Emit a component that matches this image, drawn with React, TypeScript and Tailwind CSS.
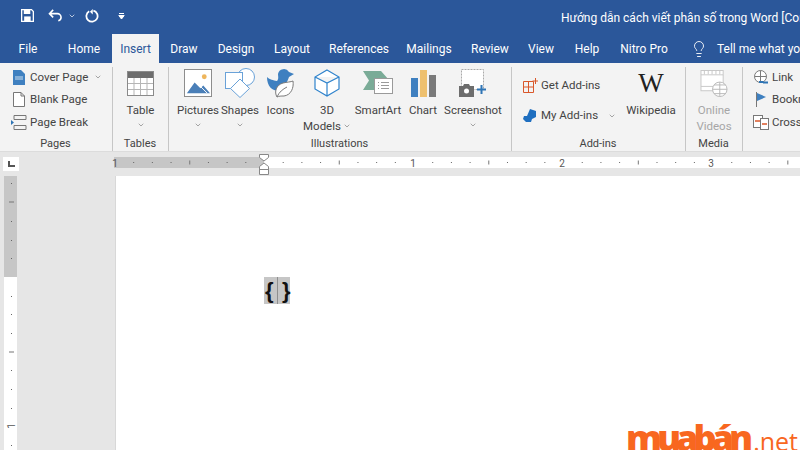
import { ChevronDown, Lightbulb } from "lucide-react"
import type { ReactNode } from "react"

const tabs = [
  { label: "File", w: "w-[56px]" },
  { label: "Home", w: "w-[56px]" },
  { label: "Insert", w: "w-[47px]", active: true },
  { label: "Draw", w: "w-[50px]" },
  { label: "Design", w: "w-[54px]" },
  { label: "Layout", w: "w-[58px]" },
  { label: "References", w: "w-[76px]" },
  { label: "Mailings", w: "w-[64px]" },
  { label: "Review", w: "w-[58px]" },
  { label: "View", w: "w-[44px]" },
  { label: "Help", w: "w-[48px]" },
  { label: "Nitro Pro", w: "w-[66px]" },
]

function Caret({ className = "" }: { className?: string }) {
  return <ChevronDown size={8} strokeWidth={1.5} className={"text-[#555] " + className} />
}

function Group({ label, className, children }: { label: string; className: string; children: ReactNode }) {
  return (
    <div className={"flex shrink-0 flex-col border-r border-[#c6c6c6] " + className}>
      <div className="flex h-[72px] min-h-0">{children}</div>
      <div className="mr-px text-center text-[11px] leading-[10px] text-[#444]">{label}</div>
    </div>
  )
}

function BigButton({
  icon,
  label,
  className,
  caret,
  muted,
}: {
  icon: ReactNode
  label: ReactNode
  className: string
  caret?: boolean
  muted?: boolean
}) {
  return (
    <div className={"flex shrink-0 flex-col items-center " + className}>
      <div className="mb-[3px] flex h-[32px] items-center justify-center">{icon}</div>
      <div className={"text-center text-[11.5px] leading-[16px] whitespace-nowrap " + (muted ? "text-[#a6a6a6]" : "text-[#444]")}>
        {label}
      </div>
      {caret && <Caret className="mt-[3px]" />}
    </div>
  )
}

function SmallRow({ icon, label, caret, caretGap = "ml-[6px]" }: { icon: ReactNode; label: string; caret?: boolean; caretGap?: string }) {
  return (
    <div className="flex h-[22.5px] items-center text-[11.5px] whitespace-nowrap text-[#444]">
      <div className="flex w-[20px] shrink-0 justify-center">{icon}</div>
      <span className="ml-[1px]">{label}</span>
      {caret && <Caret className={caretGap} />}
    </div>
  )
}

function HorizontalRuler() {
  const ticks = Array.from({ length: 37 }, (_, i) => 150 + (i - 8) * 18.69)
  return (
    <svg width="686" height="11" className="block overflow-visible">
      <rect width="686" height="11" fill="#fff" />
      <rect width="150" height="11" fill="#c6c6c6" />
      {ticks.map((x, i) => {
        const n = i - 8
        if (n % 8 === 0) return null
        return n % 4 === 0 ? (
          <rect key={i} x={x} y="3.5" width="1" height="4" fill="#777" />
        ) : (
          <rect key={i} x={x} y="5" width="1" height="1" fill="#666" />
        )
      })}
      {[
        [1, "1"],
        [299, "1"],
        [448, "2"],
        [597, "3"],
      ].map(([x, t], i) => (
        <text key={i} x={x} y="9.5" textAnchor="middle" fontSize="10" fontFamily="Roboto" fill="#555">
          {t}
        </text>
      ))}
    </svg>
  )
}

function VerticalRuler() {
  const marks = [7, 26, 45, 64, 82, 120, 138, 157, 176, 194, 213, 232, 269]
  return (
    <svg width="13" height="274" className="block">
      <rect width="13" height="274" fill="#fff" />
      <rect width="13" height="101" fill="#c6c6c6" />
      {marks.map((y, i) =>
        y === 26 || y === 176 ? (
          <rect key={i} x="5" y={y - 0.5} width="5" height="1" fill="#777" />
        ) : (
          <rect key={i} x="7" y={y} width="1" height="1" fill="#666" />
        ),
      )}
      <text x="0" y="0" transform="translate(11 250) rotate(-90)" textAnchor="middle" fontSize="10" fontFamily="Roboto" fill="#555">
        1
      </text>
    </svg>
  )
}

export default function App() {
  return (
    <div className="relative flex h-[450px] w-[800px] flex-col overflow-hidden bg-[#e6e6e6] font-['Roboto','Noto_Sans',sans-serif] text-[#444]">
      {/* title bar */}
      <div className="flex h-[34px] shrink-0 items-center bg-[#2b579a] pt-[2px] text-white">
        <div className="-mt-[5px] ml-[21px] flex items-center">
          <svg width="13" height="13" viewBox="0 0 14 14">
            <path d="M0.7 0.7h10.6l2 2v10.6H0.7z" fill="none" stroke="#fff" strokeWidth="1.4" />
            <rect x="3" y="1" width="7" height="4.4" fill="#fff" />
            <rect x="3.4" y="8" width="7" height="5" fill="#fff" />
          </svg>
          <svg width="15" height="13" viewBox="0 0 16 14" className="ml-[14px]">
            <path d="M5.5 1 1.5 5l4 4M1.500 5H10a4 4 0 0 1 4 4 3.600 3.600 0 0 1-3 3.600" fill="none" stroke="#fff" strokeWidth="1.700" />
          </svg>
          <ChevronDown size={8} strokeWidth={2} className="ml-[5px] text-white" />
          <svg width="14" height="14" viewBox="0 0 15 15" className="ml-[9px]">
            <path d="M4.500 2.400A6 6 0 1 0 9 1.800" fill="none" stroke="#fff" strokeWidth="1.900" />
            <path d="M8.300 0v6L5.300 3z" fill="#fff" />
          </svg>
          <svg width="7" height="8" viewBox="0 0 7 8" className="ml-[19px]">
            <path d="M1 1.500h5M.8 3.500h5.400L3.500 7z" stroke="#fff" fill="#fff" strokeWidth="1" />
          </svg>
        </div>
        <div className="ml-[436px] overflow-hidden text-[12px] whitespace-nowrap">
          Hướng dẫn cách viết phân số trong Word [Compatibility Mode] - Word
        </div>
      </div>

      {/* tabs */}
      <div className="flex h-[29px] shrink-0 items-center bg-[#2b579a] text-[12px] text-white">
        {tabs.map((t) => (
          <div
            key={t.label}
            className={
              "flex h-full shrink-0 items-center justify-center " +
              t.w +
              (t.active ? " bg-[#f3f3f3] text-[#2b579a]" : "")
            }
          >
            {t.label}
          </div>
        ))}
        <Lightbulb size={18} strokeWidth={1.2} className="ml-[13px] shrink-0" />
        <span className="ml-[9px] whitespace-nowrap">Tell me what you want to do</span>
      </div>

      {/* ribbon */}
      <div className="flex h-[89px] shrink-0 overflow-hidden border-b border-[#dcdcdc] bg-[#f3f3f3] pt-[4px]">
        <Group label="Pages" className="w-[113px]">
          <div className="-mt-px flex flex-col pl-[9px]">
            <SmallRow
              label="Cover Page"
              caret
              icon={
                <svg width="12" height="15" viewBox="0 0 12 15">
                  <path d="M0 0h8l4 4v11H0z" fill="#3f80c0" />
                  <path d="M2 7h8M2 9h8" stroke="#cfe0f0" />
                </svg>
              }
            />
            <SmallRow
              label="Blank Page"
              icon={
                <svg width="12" height="15" viewBox="0 0 12 15">
                  <path d="M.5.5H8L11.500 4v10.500H.5zM8 .5V4h3.500" fill="#fff" stroke="#777" />
                </svg>
              }
            />
            <SmallRow
              label="Page Break"
              icon={
                <svg width="16" height="15" viewBox="0 0 16 15">
                  <path d="M3 .5h12M3 4.500h12M3 10.500h12M3 14.500h12M3 .5v4M15 .5v4M3 10.500v4M15 10.500v4" fill="none" stroke="#777" />
                  <path d="M0 5l3 2.500L0 10z" fill="#2f75b5" />
                </svg>
              }
            />
          </div>
        </Group>

        <Group label="Tables" className="w-[56px]">
          <BigButton
            className="w-[55px]"
            label="Table"
            caret
            icon={
              <svg width="27" height="25" viewBox="0 0 27 25">
                <rect x=".5" y=".5" width="26" height="24" fill="#fff" stroke="#8a8a8a" />
                <rect x="1" y="1" width="25" height="6" fill="#6d6d6d" />
                <path d="M1 12.500h25M1 18.500h25M7 7v17M13.500 7v17M20 7v17" stroke="#b5b5b5" />
              </svg>
            }
          />
        </Group>

        <Group label="Illustrations" className="w-[343px]">
          <BigButton
            className="ml-[7px] w-[44px]"
            label="Pictures"
            caret
            icon={
              <svg width="28" height="28" viewBox="0 0 29 29">
                <rect x=".5" y=".5" width="28" height="28" fill="#fff" stroke="#8a8a8a" />
                <circle cx="21" cy="8" r="2.500" fill="#eeb55b" />
                <path d="M3 25l8-11 6 6 3-3 7 8z" fill="#4a7fb8" />
                <path d="M14 15l10 10" stroke="#fff" />
              </svg>
            }
          />
          <BigButton
            className="w-[40px]"
            label="Shapes"
            caret
            icon={
              <svg width="30" height="30" viewBox="0 0 30 30">
                <circle cx="21" cy="9" r="8.500" fill="#fff" stroke="#6aa2d8" />
                <rect x=".5" y="4.500" width="17" height="16" fill="#fff" stroke="#6aa2d8" />
                <path d="M15 11l9.500 9.500L15 29.500 5.500 20.500z" fill="#fff" stroke="#6aa2d8" />
              </svg>
            }
          />
          <BigButton
            className="w-[41px]"
            label="Icons"
            icon={
              <svg width="28" height="30" viewBox="0 0 28 30">
                <path d="M0 9c3 3 6 3 10 4 2-2 1-5 1-7a6 6 0 0 1 11-2l5 2-5 3c-1 3-2 5-3 6l-7 8C5 23 0 18 0 9z" fill="#3f80c0" />
                <path d="M10 29c-3-5-1-12 6-14 4-1 8-1 10-2 1 7-2 14-9 15-3 0-5 0-7 1zM10 29c2-5 6-8 10-10" fill="#fff" stroke="#7a7a7a" />
              </svg>
            }
          />
          <BigButton
            className="w-[52px]"
            label={
              <>
                3D
                <br />
                <span className="inline-flex items-center">
                  Models
                  <Caret className="ml-[2px]" />
                </span>
              </>
            }
            icon={
              <svg width="26" height="28" viewBox="0 0 26 28">
                <path d="M13 1l12 7v12l-12 7-12-7V8zM1 8l12 6 12-6M13 14v13" fill="#fff" stroke="#2f83cc" strokeWidth="1.200" />
              </svg>
            }
          />
          <BigButton
            className="w-[50px]"
            label="SmartArt"
            icon={
              <svg width="30" height="25" viewBox="0 0 30 25">
                <path d="M0 0h18l8 9-8 10H0l6-9.500z" fill="#7aab97" />
                <rect x="11.500" y="7.500" width="18" height="15" fill="#fff" stroke="#9a9a9a" />
                <path d="M15 11.500h1M18 11.500h8M15 14.500h1M18 14.500h8M15 17.500h1M18 17.500h8" stroke="#9a9a9a" />
              </svg>
            }
          />
          <BigButton
            className="w-[40px]"
            label="Chart"
            icon={
              <svg width="25" height="27" viewBox="0 0 25 27">
                <rect x="0" y="8" width="7" height="19" fill="#3f80c0" />
                <rect x="9" y="0" width="7" height="27" fill="#eec06e" />
                <rect x="18" y="5" width="7" height="22" fill="#7a7a7a" />
              </svg>
            }
          />
          <BigButton
            className="w-[60px]"
            label="Screenshot"
            caret
            icon={
              <svg width="28" height="28" viewBox="0 0 28 28">
                <rect x="2.500" y=".5" width="22" height="20" fill="#fff" stroke="#aaa" strokeDasharray="2 1" />
                <path d="M0 17h4l1-2h5l1 2h4v11H0z" fill="#6d6d6d" />
                <circle cx="7.500" cy="22" r="2.500" fill="#fff" />
                <path d="M18 20.500h9M22.500 16v9" stroke="#2f75b5" strokeWidth="2" />
              </svg>
            }
          />
        </Group>

        <Group label="Add-ins" className="w-[174px]">
          <div className="-mt-px flex w-[105px] shrink-0 flex-col pt-[8px] pl-[8px]">
            <SmallRow
              label="Get Add-ins"
              icon={
                <svg width="15" height="15" viewBox="0 0 15 15">
                  <path d="M.5 3.500h10v11H.5zM.5 9h10M5.500 3.500v11" fill="none" stroke="#d9582b" />
                  <path d="M12.500 0v6M9.500 3h6" stroke="#d9582b" />
                </svg>
              }
            />
            <div className="mt-[8px]">
              <SmallRow
                label="My Add-ins"
                caret
                caretGap="ml-[10px]"
                icon={
                  <svg width="14" height="13" viewBox="0 0 14 13">
                    <path d="M7 0l6 2v6l-4 2-1 3H3L0 10l1-3h3z" fill="#1f6fc0" />
                  </svg>
                }
              />
            </div>
          </div>
          <BigButton
            className="ml-[8px] w-[52px]"
            label="Wikipedia"
            icon={<span className="font-['Liberation_Serif',serif] text-[27px] leading-none text-[#222]">W</span>}
          />
        </Group>

        <Group label="Media" className="w-[57px]">
          <BigButton
            className="w-[56px]"
            muted
            label={
              <>
                Online
                <br />
                Videos
              </>
            }
            icon={
              <svg width="28" height="27" viewBox="0 0 28 28">
                <rect x=".5" y=".5" width="23" height="21" fill="#fff" stroke="#c8c8c8" />
                <path d="M.5 5h23M.5 17h23M4 .5v4M8 .5v4M12 .5v4M16 .5v4M20 .5v4" stroke="#c8c8c8" />
                <circle cx="20" cy="20" r="7.500" fill="#fff" stroke="#b8b8b8" />
                <path d="M12.500 20h15M20 12.500v15M14 15.500h12M14 24.500h12" stroke="#b8b8b8" fill="none" />
              </svg>
            }
          />
        </Group>

        <div className="-mt-px flex shrink-0 flex-col pl-[8px]">
          <SmallRow
            label="Link"
            icon={
              <svg width="15" height="15" viewBox="0 0 15 15">
                <circle cx="6.500" cy="6.500" r="6" fill="#fff" stroke="#7a7a7a" />
                <path d="M.5 6.500h12M6.500.5v12" stroke="#7a7a7a" />
                <path d="M5 12h4M9 12.500h5" stroke="#2f75b5" strokeWidth="2" />
              </svg>
            }
          />
          <SmallRow
            label="Bookmark"
            icon={
              <svg width="12" height="15" viewBox="0 0 12 15">
                <path d="M1.500 0v15" stroke="#777" />
                <path d="M2 1l9 4-9 4z" fill="#3f80c0" />
              </svg>
            }
          />
          <SmallRow
            label="Cross-reference"
            icon={
              <svg width="16" height="15" viewBox="0 0 16 15">
                <rect x=".5" y=".5" width="9" height="12" fill="#fff" stroke="#777" />
                <rect x="7.500" y="3.500" width="8" height="11" fill="#fff" stroke="#777" />
                <path d="M2 6h5M9 9h5" stroke="#d9582b" strokeWidth="1.500" />
              </svg>
            }
          />
        </div>
      </div>

      {/* ruler strip */}
      <div className="flex h-[24px] shrink-0 pt-[5px]">
        <div className="ml-[3px] flex h-[14px] w-[16px] items-center justify-center bg-white">
          <svg width="7" height="6" viewBox="0 0 7 6">
            <path d="M0 0h2v4h5v2H0z" fill="#555" />
          </svg>
        </div>
        <div className="relative ml-[95px]">
          <HorizontalRuler />
          <svg width="10" height="21" viewBox="0 0 10 21" className="absolute top-[-3px] left-[145px]">
            <path d="M.5.5h9v3L5 7 .5 3.500z" fill="#fff" stroke="#888" />
            <path d="M5 9l4.500 3.500v8h-9v-8z" fill="#fff" stroke="#888" />
            <path d="M.5 15.500h9" stroke="#888" />
          </svg>
        </div>
      </div>

      {/* document */}
      <div className="flex min-h-0 flex-1">
        <div className="ml-[4px] w-[13px] shrink-0">
          <VerticalRuler />
        </div>
        <div className="ml-[98px] flex-1 border-l border-[#d8d8d8] bg-white pt-[101px] pl-[148px]">
          <div className="flex h-[27px] w-[26px] bg-[#c6c6c6] font-['Liberation_Sans',sans-serif] text-[22px] leading-[27px] font-bold text-[#111]">
            <span className="w-[14px] border-r border-[#8f8f8f] pl-px">{"{"}</span>
            <span className="w-[12px] pl-[4px]">{"}"}</span>
          </div>
        </div>
      </div>

      {/* watermark */}
      <div className="absolute right-[2px] bottom-[-6px] flex items-baseline font-['Open_Sans',sans-serif] leading-none text-[#f8671f]">
        <span className="text-[36px] font-extrabold tracking-[-5px]">muabán</span>
        <span className="ml-[5px] text-[25px] font-normal">.net</span>
      </div>
    </div>
  )
}
